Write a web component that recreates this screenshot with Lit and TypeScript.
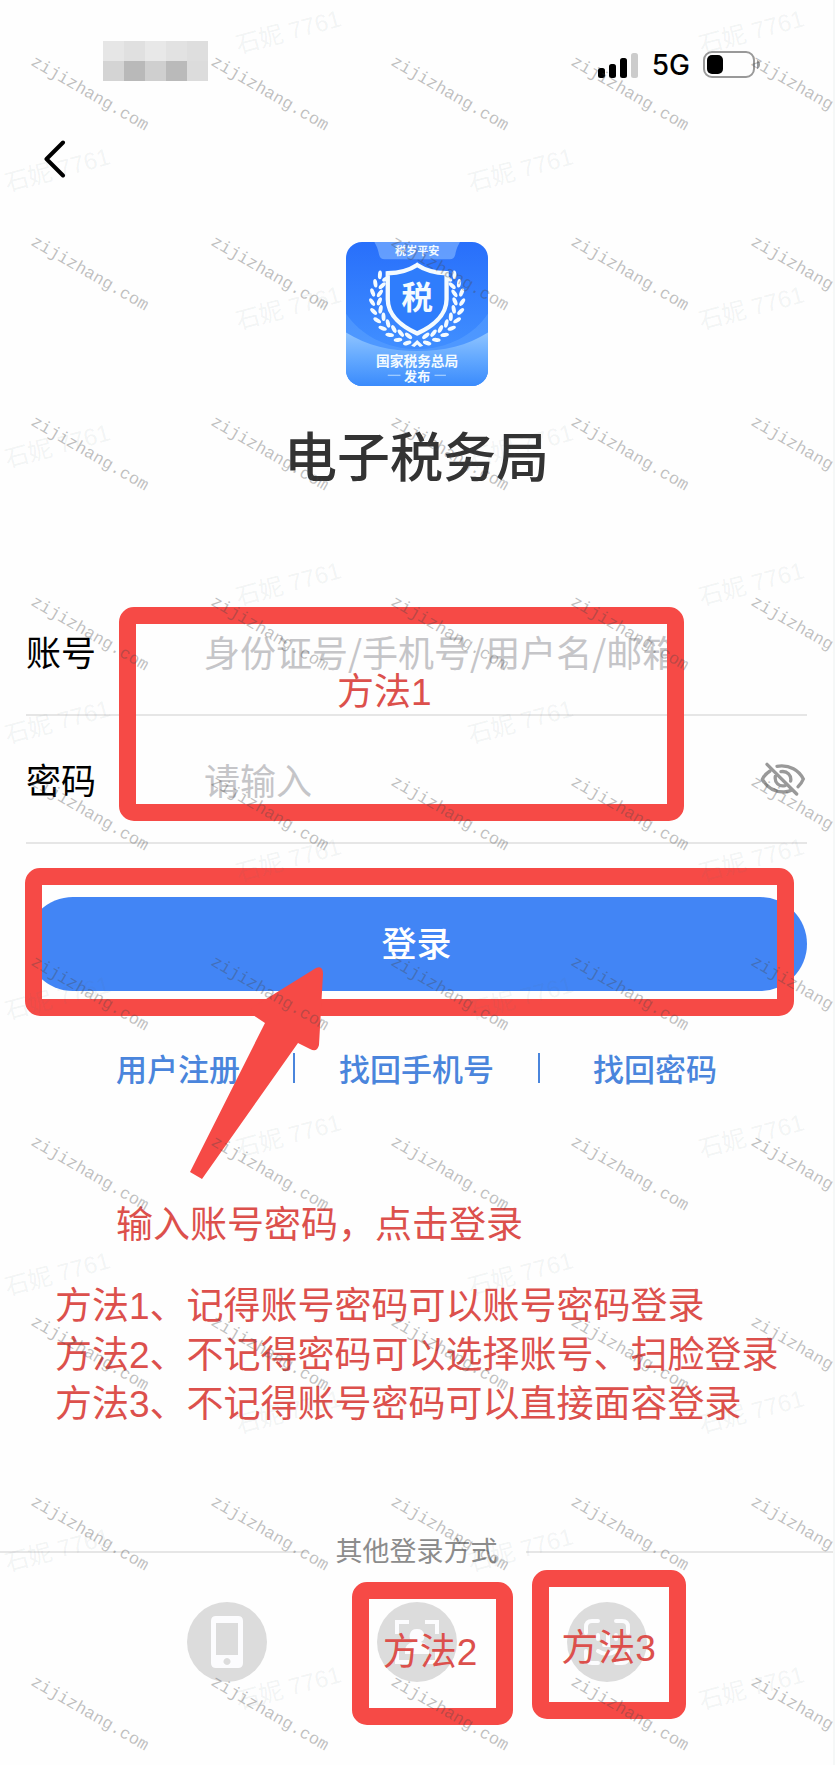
import { LitElement, html, svg, css } from "lit";
import { customElement, state } from "lit/decorators.js";

const MOSAIC = ["#e6e6e6", "#e0e0e0", "#e8e8e8", "#e2e2e2", "#dedede", "#d4d4d4", "#b9b9b9", "#cfcfcf", "#bababa", "#dcdcdc"];

@customElement("status-bar")
class StatusBar extends LitElement {
  static styles = css`
    :host { display: flex; justify-content: space-between; align-items: flex-start; padding: 41px 72px 0 103px; }
    .mosaic { display: grid; grid-template-columns: repeat(5, 21px); grid-auto-rows: 20px; }
    .right { display: flex; align-items: center; gap: 13px; padding-top: 8px; }
    .net { font: 500 28px/32px Inter, sans-serif; color: #000; }
    svg { display: block; }
  `;
  render() {
    return html`
      <div class="mosaic" aria-hidden="true">${MOSAIC.map((c) => html`<i style="background:${c}"></i>`)}</div>
      <div class="right">
        <svg width="41" height="28" viewBox="0 0 41 28" aria-label="信号">
          <rect x="0" y="17" width="7" height="10" rx="2.5" />
          <rect x="11" y="13" width="7" height="14" rx="2.5" />
          <rect x="22" y="7" width="7" height="20" rx="2.5" />
          <rect x="33" y="2" width="7" height="25" rx="2.5" fill="#ccc" />
        </svg>
        <span class="net">5G</span>
        <svg width="58" height="28" viewBox="0 0 58 28" aria-label="电池">
          <rect x="1" y="1" width="50" height="25" rx="8" fill="none" stroke="#999" stroke-width="2" />
          <rect x="4" y="4" width="16" height="19" rx="5" />
          <path d="M54 9c4 1 4 8 0 9z" fill="#999" />
        </svg>
      </div>
    `;
  }
}

@customElement("tax-logo")
class TaxLogo extends LitElement {
  static styles = css`
    :host { display: block; }
    svg { display: block; width: 142px; height: 144px; border-radius: 16px; }
    text { font-family: "Noto Sans CJK SC", sans-serif; font-weight: 700; fill: #f4fbff; text-anchor: middle; }
    .tab { font-size: 33px; }
    .mark { font-size: 94px; }
    .org { font-size: 41px; }
    .pub { font-size: 39px; }
  `;
  private leaves() {
    const out = [];
    for (const side of [-1, 1]) {
      for (let i = 0; i < 10; i++) {
        const a = ((-32 + i * 12.4) * Math.PI) / 180;
        const x = 260 + side * 124 * Math.cos(a);
        const y = 224 + 122 * Math.sin(a);
        const dir = (Math.atan2(-Math.cos(a), side * Math.sin(a)) * 180) / Math.PI;
        for (const k of [-1, 1]) {
          out.push(svg`<ellipse cx="10" cy=${k * 7} rx="13" ry="6"
            transform="translate(${x} ${y}) rotate(${dir + k * 28})" />`);
        }
      }
    }
    return out;
  }
  render() {
    return html`
      <svg viewBox="47 50 425 433" preserveAspectRatio="none" role="img" aria-label="国家税务总局">
        <defs>
          <linearGradient id="bg" x1="0" y1="0" x2="0" y2="1">
            <stop offset="0" stop-color="#286ffb" /><stop offset="0.7" stop-color="#3f8dff" />
          </linearGradient>
          <linearGradient id="wave" x1="0" y1="0" x2="0" y2="1">
            <stop offset="0" stop-color="#8fc4ff" /><stop offset="0.5" stop-color="#62a8ff" /><stop offset="1" stop-color="#3a8bfc" />
          </linearGradient>
        </defs>
        <rect x="47" y="50" width="425" height="433" fill="url(#bg)" />
        <path d="M47 265C90 330 170 372 260 372S430 330 472 265V483H47Z" fill="#62a6ff" opacity=".45" />
        <path d="M47 322C110 362 180 378 260 378S410 362 472 322V483H47Z" fill="url(#wave)" />
        <path d="M132 50H388C382 62 378 68 374 88Q370 102 358 102H162Q150 102 146 88C142 68 138 62 132 50Z" fill="#77acff" opacity=".75" />
        <g fill="#f4fbff">${this.leaves()}</g>
        <path d="M242 362L260 345L278 362L268 366L260 358L252 366Z" fill="#f4fbff" />
        <path d="M260 119C236 135 206 143 172 144V222C172 272 218 306 260 325C302 306 348 272 348 222V144C314 143 284 135 260 119Z"
          fill="#2f7dfc" stroke="#f4fbff" stroke-width="13" />
        <text class="tab" x="260" y="88">税岁平安</text>
        <text class="mark" x="260" y="250">税</text>
        <text class="org" x="260" y="423">国家税务总局</text>
        <text class="pub" x="260" y="467">发布</text>
        <path d="M172 451H210M312 451H346" stroke="#b9dcff" stroke-width="3" />
      </svg>
    `;
  }
}

@customElement("page-watermark")
class PageWatermark extends LitElement {
  static styles = css`
    :host { display: block; position: absolute; inset: 0; overflow: hidden; pointer-events: none; user-select: none; }
    .layer { position: absolute; inset: 0; }
    .sites { display: grid; grid-template-columns: repeat(5, 180px); grid-auto-rows: 180px; padding: 51px 0 0 32px; }
    .site { width: 133px; height: 20px; transform: rotate(30deg); transform-origin: left center;
      font: 17px/20px "Liberation Mono", monospace; color: rgba(70, 70, 70, 0.34); white-space: nowrap; }
    .owners { top: -37px; bottom: auto; }
    .row { display: flex; align-items: center; gap: 352px; height: 138px; padding-left: 2px; }
    .row.even { padding-left: 233px; }
    .owner { flex: 0 0 111px; transform: rotate(-15deg); white-space: nowrap; text-align: center;
      font: 24px/28px "Liberation Sans", "Noto Sans CJK SC", sans-serif; color: rgba(90, 110, 120, 0.08); }
  `;
  render() {
    return html`
      <div class="layer owners">
        ${Array.from({ length: 13 }, (_, r) => html`
          <div class="row ${r % 2 === 0 ? "even" : ""}">
            <span class="owner">石妮 7761</span><span class="owner">石妮 7761</span>
          </div>`)}
      </div>
      <div class="layer sites">
        ${Array.from({ length: 50 }, () => html`<span class="site">zijizhang.com</span>`)}
      </div>
    `;
  }
}

@customElement("app-root")
class AppRoot extends LitElement {
  @state() private visible = false;

  static styles = css`
    :host { display: block; position: relative; overflow: hidden; background: #fefefe; border-right: 2px solid #f5f7f7; color: #000;
      font-family: "Liberation Sans", "Noto Sans CJK SC", sans-serif; --red: #f64a46; --note: #dc504c; --blue: #4285f5; }
    * { box-sizing: border-box; }
    button { font: inherit; border: 0; background: none; padding: 0; cursor: pointer; }
    svg { display: block; }
    h1, p { margin: 0; }
    .nav { padding: 54px 0 0 37px; }
    .back { display: block; width: 36px; height: 48px; }
    .back svg { margin: auto; }
    .brand { display: flex; flex-direction: column; align-items: center; gap: 32px; padding-top: 59px; }
    h1 { font: 500 53px/72px "Noto Sans CJK SC", sans-serif; color: #333; }
    .form { position: relative; margin: 98px 26px 0; }
    .field { display: flex; align-items: center; height: 128px; border-bottom: 2px solid #e6e6e6; }
    .field label { flex: 0 0 178px; font: 35px/48px "Noto Sans CJK SC", sans-serif; }
    .field input { flex: 1 1 0; min-width: 0; height: 60px; padding: 0; border: 0; outline: 0; background: none;
      font: 36px/48px "Noto Sans CJK SC", sans-serif; color: #333; }
    .field input::placeholder { color: #c5c5c8; opacity: 1; }
    .eye { flex: none; }
    .frame { position: absolute; border: 17px solid var(--red); border-radius: 15px; pointer-events: none;
      display: flex; justify-content: center; color: var(--note); font-size: 37px; line-height: 48px; white-space: nowrap; }
    .frame-fields { left: 93px; right: 123px; top: 19px; bottom: 23px; justify-content: flex-start; padding: 45px 0 0 201px; }
    .submit-wrap { position: relative; margin: 53px 26px 0; }
    .submit { display: block; width: 100%; height: 94px; padding-bottom: 4px; border-radius: 47px; background: var(--blue); color: #fff;
      font: 500 35px/48px "Noto Sans CJK SC", sans-serif; }
    .frame-submit { left: -1px; right: 13px; top: -29px; bottom: -25px; }
    .arrow { position: absolute; left: 164px; top: 69px; pointer-events: none; }
    .links { display: flex; justify-content: center; align-items: center; gap: 44px; margin-top: 54px; }
    .links a { min-width: 133px; color: #4a85dc; text-decoration: none; font: 500 31px/46px "Noto Sans CJK SC", sans-serif; white-space: nowrap; }
    .links a:last-child { text-align: right; }
    .bar { width: 2px; height: 30px; background: #4a85dc; }
    .tip { margin: 111px 0 0 116px; font-size: 37px; line-height: 48px; color: var(--note); }
    .steps { margin: 32px 0 0 55px; padding: 0; list-style: none; font-size: 37px; line-height: 49px; color: var(--note); white-space: nowrap; }
    .divider { display: flex; align-items: center; gap: 28px; margin-top: 103px; font-size: 27px; line-height: 40px; color: #8c8c8c; }
    .divider::before, .divider::after { content: ""; flex: 1; height: 2px; background: #e6e6e6; }
    .methods { display: flex; justify-content: center; gap: 110px; padding: 30px 0 83px; }
    .method { position: relative; }
    .method button { display: grid; place-items: center; width: 80px; height: 80px; border-radius: 50%; background: #dcdcdc; }
    .frame-account { left: -25px; top: -20px; width: 161px; height: 143px; padding: 30px 4px 0 0; }
    .frame-face { left: -35px; top: -32px; width: 154px; height: 149px; padding-top: 38px; }
  `;

  render() {
    return html`
      <status-bar></status-bar>
      <div class="nav">
        <button class="back" aria-label="返回">
          <svg width="22" height="40" viewBox="0 0 22 40" fill="none" stroke="#000" stroke-width="4" stroke-linecap="round" stroke-linejoin="round">
            <path d="M19 3.500L2.500 20L19 36.500" />
          </svg>
        </button>
      </div>
      <header class="brand">
        <tax-logo></tax-logo>
        <h1>电子税务局</h1>
      </header>

      <div class="form">
        <div class="field">
          <label for="account">账号</label>
          <input id="account" type="text" placeholder="身份证号/手机号/用户名/邮箱" />
        </div>
        <div class="field">
          <label for="password">密码</label>
          <input id="password" type=${this.visible ? "text" : "password"} placeholder="请输入" />
          <button class="eye" aria-label="显示密码" @click=${() => (this.visible = !this.visible)}>
            <svg width="48" height="36" viewBox="55 66 144 108" fill="none" stroke="#999" stroke-width="10" stroke-linecap="round">
              <path d="M88 96C76 104 68 114 65 121C80 148 105 159 130 159Q142 159 152 154" />
              <path d="M109 82C148 76 175 95 188 120C184 130 179 137 172 143" />
              <path d="M121 98C140 95 153 109 150 126M104 112C101 131 115 144 133 140M79 76L168 165" />
            </svg>
          </button>
        </div>
        <div class="frame frame-fields">方法1</div>
      </div>

      <div class="submit-wrap">
        <button class="submit">登录</button>
        <div class="frame frame-submit"></div>
        <svg class="arrow" width="135" height="216" viewBox="0 0 135 216" fill="#f64a46" aria-hidden="true">
          <path d="M126 2Q133 -1 133 8L129 79Q127 87 120 83L108 77L12 213L0 206L75 57L63 49Q59 45 63 41Z" />
        </svg>
      </div>

      <nav class="links">
        <a href="#register">用户注册</a><span class="bar"></span>
        <a href="#phone">找回手机号</a><span class="bar"></span>
        <a href="#password">找回密码</a>
      </nav>

      <p class="tip">输入账号密码，点击登录</p>
      <ul class="steps">
        <li>方法1、记得账号密码可以账号密码登录</li>
        <li>方法2、不记得密码可以选择账号、扫脸登录</li>
        <li>方法3、不记得账号密码可以直接面容登录</li>
      </ul>

      <div class="divider">其他登录方式</div>
      <div class="methods">
        <div class="method">
          <button aria-label="手机登录">
            <svg width="32" height="52" viewBox="0 0 32 52">
              <path fill="#fcfcfe" fill-rule="evenodd" d="M5 0H27Q32 0 32 5V47Q32 52 27 52H5Q0 52 0 47V5Q0 0 5 0ZM5 7V39H27V7ZM16 42a3.500 3.500 0 1 0 .01 0Z" />
            </svg>
          </button>
        </div>
        <div class="method">
          <button aria-label="账号扫脸登录">
            <svg width="44" height="44" viewBox="0 0 44 44" fill="none" stroke="#fcfcfe" stroke-width="4">
              <path d="M2 14V2H14M30 2H42V14M42 30V42H30M14 42H2V30" />
              <path d="M22 9a7 7 0 0 1 4 13q8 2 8 9v3H10v-3q0-7 8-9a7 7 0 0 1 4-13Z" fill="#fcfcfe" stroke="none" />
            </svg>
          </button>
          <div class="frame frame-account">方法2</div>
        </div>
        <div class="method">
          <button aria-label="面容登录">
            <svg width="46" height="46" viewBox="0 0 46 46" fill="none" stroke="#fcfcfe" stroke-width="4" stroke-linecap="round">
              <path d="M2 14V8Q2 2 8 2H14M32 2H38Q44 2 44 8V14M44 32V38Q44 44 38 44H32M14 44H8Q2 44 2 38V32" />
              <path d="M14 16V20M32 16V20M24 16V26H20M14 32Q23 38 32 32" />
            </svg>
          </button>
          <div class="frame frame-face">方法3</div>
        </div>
      </div>
      <page-watermark aria-hidden="true"></page-watermark>
    `;
  }
}
